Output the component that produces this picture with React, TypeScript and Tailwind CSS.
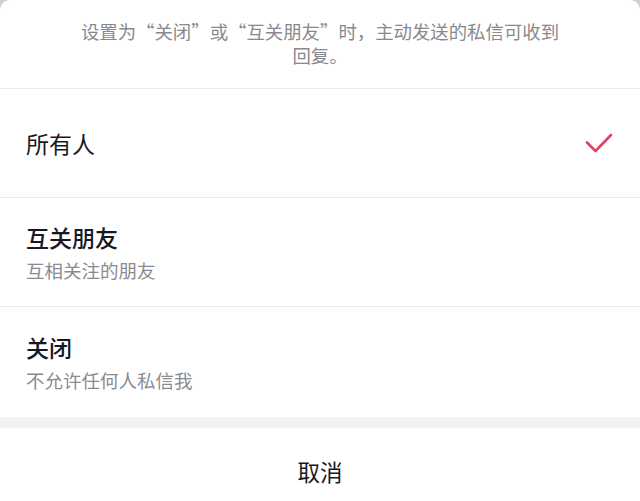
import React from "react";

const font = { fontFamily: '"Noto Sans CJK SC", "Noto Sans", sans-serif' };

function Check() {
  return (
    <svg width="28" height="22" viewBox="0 0 28 22" fill="none">
      <path d="M2 10.5 L10.5 19 L26 3" stroke="#e1415f" strokeWidth="2.6" strokeLinecap="round" strokeLinejoin="round" />
    </svg>
  );
}

export default function App() {
  return (
    <div className="w-[640px] h-[501px] bg-[#cfcfcf] overflow-hidden" style={font}>
      <div className="bg-white rounded-t-[10px] flex flex-col">
        <div className="shrink-0 h-[89px] border-b border-[#ececec] flex flex-col items-center pt-[19px] text-[18.4px] leading-[24px] text-[#88898e]">
          <span className="whitespace-nowrap">设置为“关闭”或“互关朋友”时，主动发送的私信可收到</span>
          <span>回复。</span>
        </div>
        <div className="shrink-0 h-[109px] flex items-center justify-between pl-[26px] pr-[27px] border-b border-[#ececec]">
          <div className="text-[23px] leading-[30px] text-[#161823]">所有人</div>
          <Check />
        </div>
        <div className="shrink-0 h-[109px] flex items-center pl-[26px] border-b border-[#ececec]">
          <div className="flex flex-col gap-[6px]">
            <div className="text-[23px] leading-[30px] text-[#161823] font-medium">互关朋友</div>
            <div className="text-[18.5px] leading-[24px] text-[#8a8b91]">互相关注的朋友</div>
          </div>
        </div>
        <div className="shrink-0 h-[110px] flex items-center pl-[26px]">
          <div className="flex flex-col gap-[6px]">
            <div className="text-[23px] leading-[30px] text-[#161823] font-medium">关闭</div>
            <div className="text-[18.5px] leading-[24px] text-[#8a8b91]">不允许任何人私信我</div>
          </div>
        </div>
        <div className="shrink-0 h-[11px] bg-[#f2f2f2]" />
        <div className="shrink-0 h-[90px] flex items-center justify-center text-[22.5px] text-[#161823] pb-[2px]">取消</div>
      </div>
    </div>
  );
}
